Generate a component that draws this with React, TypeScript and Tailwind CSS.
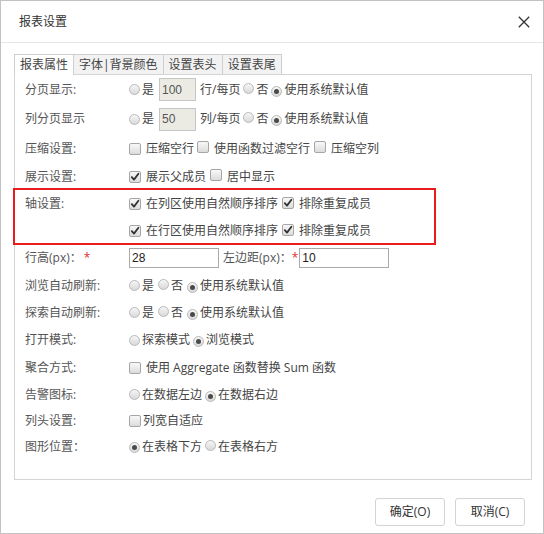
import React from "react";

const FONT = { fontFamily: '"Open Sans", "Noto Sans CJK SC", sans-serif' };
const ARIAL = { fontFamily: '"Liberation Sans", sans-serif' };

function Radio({ checked = false }: { checked?: boolean }) {
  return (
    <span className="relative inline-flex shrink-0 items-center justify-center w-[11px] h-[11px] rounded-full border border-[#b9b9b9] bg-linear-to-b from-[#f6f6f6] to-[#d9d9d9]">
      {checked && <span className="w-[5px] h-[5px] rounded-full bg-[#4a4a4a]" />}
    </span>
  );
}

function Check({ checked = false }: { checked?: boolean }) {
  return (
    <span className="relative inline-flex shrink-0 items-center justify-center w-[12px] h-[12px] rounded-[2px] border border-[#a6a6a6] bg-linear-to-b from-[#f8f8f8] to-[#dcdcdc]">
      {checked && (
        <svg width="10" height="10" viewBox="0 0 10 10">
          <path d="M1.8 5.2 L4 7.6 L8.4 1.8" stroke="#333" strokeWidth="1.8" fill="none" strokeLinecap="round" strokeLinejoin="round" />
        </svg>
      )}
    </span>
  );
}

function Row({ label, h, children }: { label?: React.ReactNode; h: string; children: React.ReactNode }) {
  return (
    <div className={`flex items-center ${h}`}>
      <div className="w-[114px] pl-[10px] text-[#555] shrink-0">{label}</div>
      <div className="flex items-center text-[#444]">{children}</div>
    </div>
  );
}

function DefaultRadios() {
  return (
    <>
      <Radio />
      <span className="ml-[2px]">是</span>
      <span className="ml-[4px]"><Radio /></span>
      <span className="ml-[2px]">否</span>
      <span className="ml-[4px]"><Radio checked /></span>
      <span className="ml-[2px]">使用系统默认值</span>
    </>
  );
}

export default function App() {
  return (
    <div className="w-[544px] h-[534px] bg-white border border-[#c2c2c2] flex flex-col text-[12px] leading-[16px]" style={FONT}>
      <div className="h-[42px] border-b border-[#e6e6e6] flex items-center justify-between pl-[18px] pr-[13px] shrink-0">
        <span className="text-[12px] text-[#333]">报表设置</span>
        <svg width="12" height="12" viewBox="0 0 12 12">
          <path d="M0.8 0.8 L11.2 11.2 M11.2 0.8 L0.8 11.2" stroke="#333" strokeWidth="1.3" />
        </svg>
      </div>
      <div className="pl-[13px] pr-[11px] pt-[11px]">
        <div className="flex h-[20px] text-[#444]">
          <div className="h-[21px] px-[5px] flex items-center bg-white border border-b-0 border-[#cfcfcf] relative z-10">报表属性</div>
          <div className="h-[20px] px-[5px] flex items-center bg-[#f2f2f2] border-t border-r border-[#cfcfcf]">字体|背景颜色</div>
          <div className="h-[20px] px-[5px] flex items-center bg-[#f2f2f2] border-t border-r border-[#cfcfcf]">设置表头</div>
          <div className="h-[20px] px-[5px] flex items-center bg-[#f2f2f2] border-t border-r border-[#cfcfcf]">设置表尾</div>
        </div>
        <div className="relative h-[406px] border border-[#d4d4d4]">
          <Row label="分页显示:" h="h-[29px]">
            <Radio />
            <span className="ml-[2px]">是</span>
            <div className="ml-[5px] w-[37px] h-[23px] border border-[#c6c6c6] bg-[#ebebe4] flex items-center pl-[2px] text-[#555]" style={ARIAL}>100</div>
            <span className="ml-[4px]">行/每页</span>
            <span className="ml-[3px]"><Radio /></span>
            <span className="ml-[2px]">否</span>
            <span className="ml-[3px]"><Radio checked /></span>
            <span className="ml-[2px]">使用系统默认值</span>
          </Row>
          <Row label="列分页显示" h="h-[30px]">
            <Radio />
            <span className="ml-[2px]">是</span>
            <div className="ml-[5px] w-[37px] h-[23px] border border-[#c6c6c6] bg-[#ebebe4] flex items-center pl-[2px] text-[#555]" style={ARIAL}>50</div>
            <span className="ml-[4px]">列/每页</span>
            <span className="ml-[3px]"><Radio /></span>
            <span className="ml-[2px]">否</span>
            <span className="ml-[3px]"><Radio checked /></span>
            <span className="ml-[2px]">使用系统默认值</span>
          </Row>
          <Row label="压缩设置:" h="h-[30px]">
            <Check />
            <span className="ml-[5px]">压缩空行</span>
            <span className="ml-[3px]"><Check /></span>
            <span className="ml-[5px]">使用函数过滤空行</span>
            <span className="ml-[4px]"><Check /></span>
            <span className="ml-[5px]">压缩空列</span>
          </Row>
          <Row label="展示设置:" h="h-[26px]">
            <Check checked />
            <span className="ml-[5px]">展示父成员</span>
            <span className="ml-[4px]"><Check /></span>
            <span className="ml-[5px]">居中显示</span>
          </Row>
          <Row label="轴设置:" h="h-[27px]">
            <Check checked />
            <span className="ml-[5px]">在列区使用自然顺序排序</span>
            <span className="ml-[4px]"><Check checked /></span>
            <span className="ml-[5px]">排除重复成员</span>
          </Row>
          <Row h="h-[27px]">
            <Check checked />
            <span className="ml-[5px]">在行区使用自然顺序排序</span>
            <span className="ml-[4px]"><Check checked /></span>
            <span className="ml-[5px]">排除重复成员</span>
          </Row>
          <Row label={<>行高(px)：<span className="ml-[2px] text-[#e03030]">*</span></>} h="h-[28px]">
            <div className="w-[90px] h-[20px] border border-[#a9a9a9] bg-white flex items-center pl-[2px] text-[#222]" style={ARIAL}>28</div>
            <span className="ml-[4px] text-[#555]">左边距(px)：</span>
            <span className="text-[#e03030]">*</span>
            <div className="ml-[1px] w-[90px] h-[20px] border border-[#a9a9a9] bg-white flex items-center pl-[2px] text-[#222]" style={ARIAL}>10</div>
          </Row>
          <Row label="浏览自动刷新:" h="h-[27px]">
            <DefaultRadios />
          </Row>
          <Row label="探索自动刷新:" h="h-[27px]">
            <DefaultRadios />
          </Row>
          <Row label="打开模式:" h="h-[28px]">
            <Radio />
            <span className="ml-[2px]">探索模式</span>
            <span className="ml-[3px]"><Radio checked /></span>
            <span className="ml-[2px]">浏览模式</span>
          </Row>
          <Row label="聚合方式:" h="h-[27px]">
            <Check />
            <span className="ml-[5px]">使用 Aggregate 函数替换 Sum 函数</span>
          </Row>
          <Row label="告警图标:" h="h-[27px]">
            <Radio />
            <span className="ml-[2px]">在数据左边</span>
            <span className="ml-[3px]"><Radio checked /></span>
            <span className="ml-[2px]">在数据右边</span>
          </Row>
          <Row label="列头设置:" h="h-[26px]">
            <Check />
            <span className="ml-[2px]">列宽自适应</span>
          </Row>
          <Row label="图形位置：" h="h-[26px]">
            <Radio checked />
            <span className="ml-[2px]">在表格下方</span>
            <span className="ml-[3px]"><Radio /></span>
            <span className="ml-[2px]">在表格右方</span>
          </Row>
          <div className="pointer-events-none absolute left-[-2px] top-[113px] w-[423px] h-[57px] border-2 border-[#e81c1c]" />
        </div>
      </div>
      <div className="flex justify-end gap-[10px] pt-[18px] pr-[18px]">
        <button className="w-[70px] h-[28px] border border-[#d3d3d3] rounded-[3px] bg-white text-[#333] text-[12px]" style={FONT}>确定(O)</button>
        <button className="w-[70px] h-[28px] border border-[#d3d3d3] rounded-[3px] bg-white text-[#333] text-[12px]" style={FONT}>取消(C)</button>
      </div>
    </div>
  );
}
